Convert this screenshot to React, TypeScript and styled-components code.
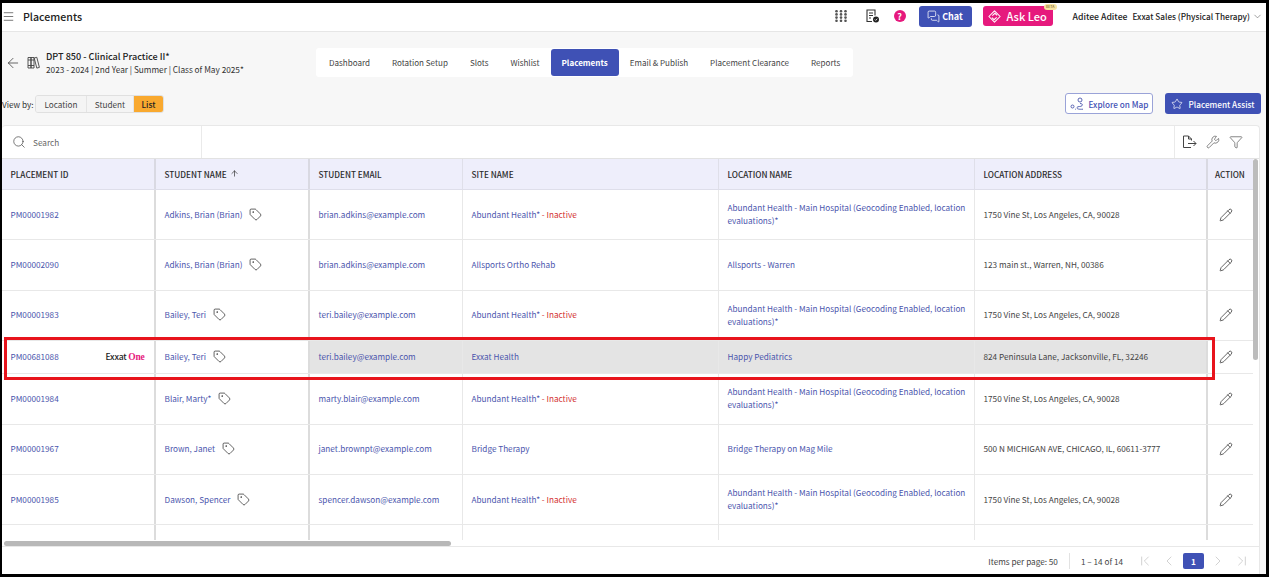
import React from 'react';
import styled, { createGlobalStyle } from 'styled-components';
import {
  Menu, ArrowLeft, Search, Tag, Pencil, Funnel, Wrench, Star, ChevronDown, MessagesSquare,
  ArrowUp, ChevronFirst, ChevronLeft, ChevronRight, ChevronLast,
} from 'lucide-react';

const GlobalStyle = createGlobalStyle`
  html, body { margin: 0; padding: 0; background: #fff; overflow: hidden; }
  body { font-family: "Noto Sans CJK SC", "Noto Sans", sans-serif; font-size: 8.2px; color: #333; }
  * { box-sizing: border-box; }
`;

interface Placement {
  id: string;
  name: string;
  email: string;
  site: string;
  inactive?: boolean;
  location: string;
  address: string;
  one?: boolean;
}

const ABUNDANT = 'Abundant Health - Main Hospital (Geocoding Enabled, location evaluations)*';
const VINE = '1750 Vine St, Los Angeles, CA, 90028';

const placements: Placement[] = [
  { id: 'PM00001982', name: 'Adkins, Brian (Brian)', email: 'brian.adkins@example.com', site: 'Abundant Health*', inactive: true, location: ABUNDANT, address: VINE },
  { id: 'PM00002090', name: 'Adkins, Brian (Brian)', email: 'brian.adkins@example.com', site: 'Allsports Ortho Rehab', location: 'Allsports - Warren', address: '123 main st., Warren, NH, 00386' },
  { id: 'PM00001983', name: 'Bailey, Teri', email: 'teri.bailey@example.com', site: 'Abundant Health*', inactive: true, location: ABUNDANT, address: VINE },
  { id: 'PM00681088', name: 'Bailey, Teri', email: 'teri.bailey@example.com', site: 'Exxat Health', location: 'Happy Pediatrics', address: '824 Peninsula Lane, Jacksonville, FL, 32246', one: true },
  { id: 'PM00001984', name: 'Blair, Marty*', email: 'marty.blair@example.com', site: 'Abundant Health*', inactive: true, location: ABUNDANT, address: VINE },
  { id: 'PM00001967', name: 'Brown, Janet', email: 'janet.brownpt@example.com', site: 'Bridge Therapy', location: 'Bridge Therapy on Mag Mile', address: '500 N MICHIGAN AVE, CHICAGO, IL, 60611-3777' },
  { id: 'PM00001985', name: 'Dawson, Spencer', email: 'spencer.dawson@example.com', site: 'Abundant Health*', inactive: true, location: ABUNDANT, address: VINE },
];

const tabs = ['Dashboard', 'Rotation Setup', 'Slots', 'Wishlist', 'Placements', 'Email & Publish', 'Placement Clearance', 'Reports'];
const COLUMNS = '154px 154px 153px 256px 256px 233px 45px';

const App: React.FC = () => {
  return (
    <>
      <GlobalStyle />
      <Frame>
        <TopBar>
          <Menu size={13} strokeWidth={1.2} color="#333" />
          <PageTitle>Placements</PageTitle>
          <TopRight>
            <GridIcon />
            <DocIcon />
            <HelpDot>?</HelpDot>
            <ChatButton><MessagesSquare size={13} strokeWidth={1.4} />Chat</ChatButton>
            <LeoButton>
              <LeoIcon />Ask Leo
              <BetaBadge>BETA</BetaBadge>
            </LeoButton>
            <UserName>Aditee Aditee</UserName>
            <OrgName>Exxat Sales (Physical Therapy)</OrgName>
            <ChevronDown size={11} strokeWidth={1.2} color="#555" />
          </TopRight>
        </TopBar>

        <CourseRow>
          <CourseInfo>
            <ArrowLeft size={16} strokeWidth={1.1} color="#333" />
            <BooksIcon />
            <div>
              <CourseTitle>DPT 850 - Clinical Practice II*</CourseTitle>
              <CourseMeta>2023 - 2024 | 2nd Year | Summer | Class of May 2025*</CourseMeta>
            </div>
          </CourseInfo>
          <TabPanel>
            {tabs.map(tab => (
              <TabItem key={tab} $active={tab === 'Placements'}>{tab}</TabItem>
            ))}
          </TabPanel>
        </CourseRow>

        <ViewRow>
          <ViewLabel>View by:</ViewLabel>
          <ViewGroup>
            <ViewOption $width={50}>Location</ViewOption>
            <ViewOption $width={47}>Student</ViewOption>
            <ViewOption $width={30} $active>List</ViewOption>
          </ViewGroup>
          <ActionButtons>
            <OutlineButton><RouteIcon />Explore on Map</OutlineButton>
            <SolidButton><Star size={12} strokeWidth={1.4} />Placement Assist</SolidButton>
          </ActionButtons>
        </ViewRow>

        <Card>
          <Toolbar>
            <SearchBox>
              <Search size={14} strokeWidth={1.2} color="#444" />
              <SearchText>Search</SearchText>
            </SearchBox>
            <ToolBox>
              <ExportIcon />
              <Wrench size={14} strokeWidth={1.1} color="#444" />
              <Funnel size={14} strokeWidth={1.1} color="#444" />
            </ToolBox>
          </Toolbar>

          <TableWrap>
            <Table>
              <HeadRow>
                <HeadCell $thick>PLACEMENT ID</HeadCell>
                <HeadCell $thick>STUDENT NAME <ArrowUp size={9} strokeWidth={1.8} /></HeadCell>
                <HeadCell>STUDENT EMAIL</HeadCell>
                <HeadCell>SITE NAME</HeadCell>
                <HeadCell>LOCATION NAME</HeadCell>
                <HeadCell $thick>LOCATION ADDRESS</HeadCell>
                <HeadCell $last>ACTION</HeadCell>
              </HeadRow>
              {placements.map(p => (
                <Row key={p.id} $short={p.one}>
                  <Cell $thick>
                    <LinkText>{p.id}</LinkText>
                    {p.one && <OneLogo>Exxat <b>One</b></OneLogo>}
                  </Cell>
                  <Cell $thick>
                    <LinkText>{p.name}</LinkText>
                    <TagMark><Tag size={13} strokeWidth={1.3} color="#222" /></TagMark>
                  </Cell>
                  <Cell $grey={p.one}><LinkText>{p.email}</LinkText></Cell>
                  <Cell $grey={p.one}>
                    <LinkText>{p.site}</LinkText>
                    {p.inactive && <InactiveText>&nbsp;- Inactive</InactiveText>}
                  </Cell>
                  <Cell $grey={p.one}><LinkText>{p.location}</LinkText></Cell>
                  <Cell $grey={p.one} $thick>{p.address}</Cell>
                  <Cell $last><Pencil size={14} strokeWidth={1.2} color="#222" /></Cell>
                </Row>
              ))}
              <FillerRow>
                <Cell $thick />
                <Cell $thick />
                <Cell />
                <Cell />
                <Cell />
                <Cell $thick />
                <Cell $last />
              </FillerRow>
            </Table>
            <VerticalTrack><VerticalThumb /></VerticalTrack>
          </TableWrap>

          <HorizontalTrack><HorizontalThumb /></HorizontalTrack>

          <Footer>
            <span>Items per page: 50</span>
            <FooterDivider />
            <span>1 – 14 of 14</span>
            <Pager>
              <ChevronFirst size={16} strokeWidth={1} />
              <ChevronLeft size={16} strokeWidth={1} />
              <PageNumber>1</PageNumber>
              <ChevronRight size={16} strokeWidth={1} />
              <ChevronLast size={16} strokeWidth={1} />
            </Pager>
          </Footer>
        </Card>

        <RedOutline />
      </Frame>
    </>
  );
};

const GridIcon = () => (
  <svg width="12" height="12" viewBox="0 0 12 12" fill="#555">
    {[1.5, 6, 10.5].map(x =>
      [1.2, 4.4, 7.6, 10.8].map(y => <circle key={`${x}-${y}`} cx={x} cy={y} r="1.3" />)
    )}
  </svg>
);

const DocIcon = () => (
  <DocSvg width="14" height="14" viewBox="0 0 14 14" fill="none" stroke="#333" strokeWidth="1.1">
    <path d="M6 12.5H1V1H9V6.5" />
    <path d="M3 4H7M3 6.5H7M3 9H5" />
    <circle cx="10" cy="10.5" r="3" fill="#222" stroke="none" />
    <path d="M8.8 10.5L9.7 11.4L11.3 9.7" stroke="#fff" strokeWidth="0.8" />
  </DocSvg>
);

const BooksIcon = () => (
  <svg width="13" height="15" viewBox="0 0 13 15" fill="none" stroke="#444" strokeWidth="0.9">
    <path d="M1 2.5H4V13H1ZM4 2.5H7V13H4Z" />
    <path d="M7.2 3L9.8 2.3L12.4 12.4L9.8 13.1Z" />
    <path d="M1 5H7M1 10.5H7" />
  </svg>
);

const LeoIcon = () => (
  <svg width="13" height="13" viewBox="0 0 15 15" fill="none" stroke="#fff" strokeWidth="1.2">
    <path d="M7.5 1L14 7.5L7.5 14L1 7.5Z" strokeLinejoin="round" />
    <path d="M5 6.5L8 3.8L10.5 6.2M10 8.5L7 11.2L4.5 8.8" />
  </svg>
);

const RouteIcon = () => (
  <svg width="15" height="14" viewBox="0 0 15 14" fill="none" stroke="#4b56ad" strokeWidth="0.9">
    <circle cx="10" cy="3" r="2" />
    <circle cx="2.5" cy="9.5" r="1.5" />
    <path d="M10 6.5C12 6.5 13 7.5 12 8.7C11 10 7.5 9 7 10.5C6.6 12 9 12.5 13 12.2M5 12.2H5.8" />
  </svg>
);

const ExportIcon = () => (
  <svg width="15" height="14" viewBox="0 0 15 14" fill="none" stroke="#444" strokeWidth="1">
    <path d="M9 12.5H1.5V1H6.5L9.5 4V5.5" />
    <path d="M6.5 1V4H9.5" />
    <path d="M6 8.5H14M11.5 6L14 8.5L11.5 11" />
  </svg>
);

const Frame = styled.div`
  position: relative;
  display: flex;
  flex-direction: column;
  width: 1269px;
  height: 577px;
  overflow: hidden;
  background: #f7f7f7;
  border-style: solid;
  border-color: #000;
  border-width: 3px 3px 3px 2px;
`;

const TopBar = styled.header`
  display: flex;
  align-items: center;
  flex: none;
  height: 29px;
  padding: 0 3px 2px 0;
  background: #fff;
  border-bottom: 1px solid #e6e6e6;
`;

const PageTitle = styled.span`
  margin-left: 8px;
  font-size: 10.6px;
  font-weight: 500;
  color: #222;
`;

const TopRight = styled.div`
  display: flex;
  align-items: center;
  margin-left: auto;
`;

const DocSvg = styled.svg`
  margin-left: 19px;
`;

const HelpDot = styled.span`
  display: flex;
  align-items: center;
  justify-content: center;
  width: 12px;
  height: 12px;
  margin: 0 13px 0 14px;
  border-radius: 50%;
  background: #e6197d;
  color: #fff;
  font-size: 9px;
  font-weight: 700;
`;

const ChatButton = styled.span`
  display: flex;
  align-items: center;
  gap: 2px;
  justify-content: center;
  width: 53px;
  height: 21px;
  border-radius: 3px;
  background: #3f51b5;
  color: #fff;
  font-size: 9px;
  font-weight: 700;
`;

const LeoButton = styled.span`
  position: relative;
  display: flex;
  align-items: center;
  gap: 6px;
  width: 70px;
  height: 20px;
  margin: 0 20px 0 11px;
  padding-left: 5px;
  border-radius: 3px;
  background: #e6197d;
  color: #fff;
  font-size: 11px;
  font-weight: 500;
`;

const BetaBadge = styled.span`
  position: absolute;
  top: -2px;
  right: -4px;
  padding: 0 2px;
  border-radius: 3px;
  background: #f8e3a0;
  color: #7a6a30;
  font-size: 3.5px;
  line-height: 6px;
`;

const UserName = styled.span`
  font-size: 8.7px;
  font-weight: 500;
  color: #222;
`;

const OrgName = styled(UserName)`
  margin: 0 2px 0 5px;
  font-size: 8.2px;
`;

const CourseRow = styled.div`
  display: flex;
  align-items: center;
  flex: none;
  height: 29px;
  margin-top: 16px;
`;

const CourseInfo = styled.div`
  display: flex;
  align-items: center;
  width: 314px;
  padding-left: 3px;
  gap: 6px;
`;

const CourseTitle = styled.div`
  font-size: 9.1px;
  font-weight: 500;
  line-height: 13px;
  color: #222;
`;

const CourseMeta = styled.div`
  font-size: 8.25px;
  line-height: 12px;
  color: #333;
`;

const TabPanel = styled.nav`
  display: flex;
  align-items: center;
  height: 29px;
  padding: 0 2px;
  border-radius: 3px;
  background: #fff;
  font-size: 8.05px;
`;

const TabItem = styled.span<{ $active?: boolean }>`
  display: flex;
  align-items: center;
  height: 27px;
  padding: 0 11px 1px;
  border-radius: 3px;
  background: ${p => (p.$active ? '#3f51b5' : 'transparent')};
  color: ${p => (p.$active ? '#fff' : '#444')};
  font-weight: ${p => (p.$active ? 700 : 400)};
`;

const ViewRow = styled.div`
  display: flex;
  align-items: center;
  flex: none;
  height: 21px;
  margin-top: 16px;
  padding-right: 5px;
`;

const ViewLabel = styled.span`
  width: 33px;
  color: #333;
  white-space: nowrap;
`;

const ViewGroup = styled.div`
  display: flex;
  height: 18px;
  overflow: hidden;
  border: 1px solid #e0e0e0;
  border-radius: 3px;
`;

const ViewOption = styled.span<{ $width: number; $active?: boolean }>`
  display: flex;
  align-items: center;
  justify-content: center;
  width: ${p => p.$width}px;
  background: ${p => (p.$active ? '#f9a92f' : '#f4f4f4')};
  color: ${p => (p.$active ? '#222' : '#444')};
  font-weight: ${p => (p.$active ? 500 : 400)};
  & + & { border-left: 1px solid #e4e4e4; }
`;

const ActionButtons = styled.div`
  display: flex;
  gap: 12px;
  margin-left: auto;
`;

const OutlineButton = styled.span`
  display: flex;
  align-items: center;
  justify-content: center;
  gap: 4px;
  width: 88px;
  height: 21px;
  border: 1px solid #9aa3d8;
  border-radius: 3px;
  background: #fff;
  color: #3f51b5;
  font-weight: 500;
  white-space: nowrap;
`;

const SolidButton = styled.span`
  display: flex;
  align-items: center;
  justify-content: center;
  gap: 5px;
  width: 96px;
  height: 21px;
  border-radius: 3px;
  background: #3f51b5;
  color: #fff;
  font-weight: 500;
  white-space: nowrap;
`;

const Card = styled.section`
  display: flex;
  flex: 1;
  flex-direction: column;
  min-height: 0;
  width: 1258px;
  margin-top: 11px;
  background: #fff;
  border: 1px solid #e8e8e8;
  border-left: 0;
  border-bottom: 0;
  border-radius: 4px 4px 0 0;
`;

const Toolbar = styled.div`
  display: flex;
  justify-content: space-between;
  flex: none;
  height: 33px;
  border-bottom: 1px solid #e2e2e2;
`;

const SearchBox = styled.div`
  display: flex;
  align-items: center;
  gap: 7px;
  width: 200px;
  padding-left: 10px;
  border-right: 1px solid #eaeaea;
`;

const SearchText = styled.span`
  color: #666;
`;

const ToolBox = styled.div`
  display: flex;
  align-items: center;
  gap: 9px;
  width: 85px;
  padding-left: 7px;
  border-left: 1px solid #eaeaea;
`;

const TableWrap = styled.div`
  display: flex;
  flex: none;
  height: 381px;
  overflow: hidden;
`;

const Table = styled.div`
  width: 1251px;
`;

const HeadRow = styled.div`
  display: grid;
  grid-template-columns: ${COLUMNS};
  height: 31px;
  background: #eeeefb;
  border-bottom: 1px solid #dedeea;
`;

const HeadCell = styled.div<{ $thick?: boolean; $last?: boolean }>`
  display: flex;
  align-items: center;
  gap: 3px;
  padding-left: ${p => (p.$last ? 7 : 8.5)}px;
  padding-bottom: 1px;
  border-right: ${p => (p.$last ? 'none' : p.$thick ? '2px solid #d9d9e2' : '1px solid #dfdfe9')};
  color: #2b2b2b;
  font-size: 8.2px;
  font-weight: 500;
  white-space: nowrap;
`;

const Row = styled.div<{ $short?: boolean }>`
  display: grid;
  grid-template-columns: ${COLUMNS};
  height: ${p => (p.$short ? 33 : 50.4)}px;
  border-bottom: 1px solid #e8e8e8;
`;

const FillerRow = styled(Row)`
  height: 16px;
  border-bottom: 0;
`;

const Cell = styled.div<{ $thick?: boolean; $last?: boolean; $grey?: boolean }>`
  display: flex;
  align-items: center;
  min-width: 0;
  padding: ${p => (p.$last ? '0 0 0 11px' : '0 8.5px 1px')};
  border-right: ${p => (p.$last ? 'none' : p.$thick ? '2px solid #dcdcdc' : '1px solid #e8e8e8')};
  background: ${p => (p.$grey ? '#e4e4e4' : 'transparent')};
  color: #444;
  line-height: 13px;
`;

const LinkText = styled.span`
  color: #4b56ad;
`;

const InactiveText = styled.span`
  color: #d32f2f;
  white-space: nowrap;
`;

const TagMark = styled.span`
  display: inline-flex;
  margin-left: 7px;
`;

const OneLogo = styled.span`
  margin-left: auto;
  padding-right: 1px;
  color: #222;
  font-size: 8.6px;
  font-weight: 500;
  white-space: nowrap;
  letter-spacing: -0.2px;
  b {
    color: #e6197d;
    font-family: "Liberation Serif", serif;
    font-size: 9.5px;
    font-weight: 700;
  }
`;

const VerticalTrack = styled.div`
  flex: none;
  width: 5px;
`;

const VerticalThumb = styled.div`
  height: 201px;
  border-radius: 3px;
  background: #bcbcbc;
`;

const HorizontalTrack = styled.div`
  flex: none;
  height: 7px;
  padding: 1px 0 0 2px;
  border-bottom: 1px solid #e8e8e8;
`;

const HorizontalThumb = styled.div`
  width: 447px;
  height: 5px;
  border-radius: 3px;
  background: #b8b8b8;
`;

const Footer = styled.footer`
  display: flex;
  align-items: center;
  justify-content: flex-end;
  flex: 1;
  padding-right: 9px;
  color: #444;
`;

const FooterDivider = styled.span`
  width: 1px;
  height: 16px;
  margin: 0 11px;
  background: #e2e2e2;
`;

const Pager = styled.div`
  display: flex;
  align-items: center;
  gap: 8px;
  margin-left: 14px;
  color: #bbb;
`;

const PageNumber = styled.span`
  display: flex;
  align-items: center;
  justify-content: center;
  width: 21px;
  height: 16px;
  margin: 0 -2px;
  border-radius: 2px;
  background: #3f51b5;
  color: #fff;
  font-weight: 700;
`;

const RedOutline = styled.div`
  position: absolute;
  top: 334px;
  left: 2px;
  width: 1211px;
  height: 43px;
  border: 3px solid #e8141c;
  pointer-events: none;
`;

export default App;
